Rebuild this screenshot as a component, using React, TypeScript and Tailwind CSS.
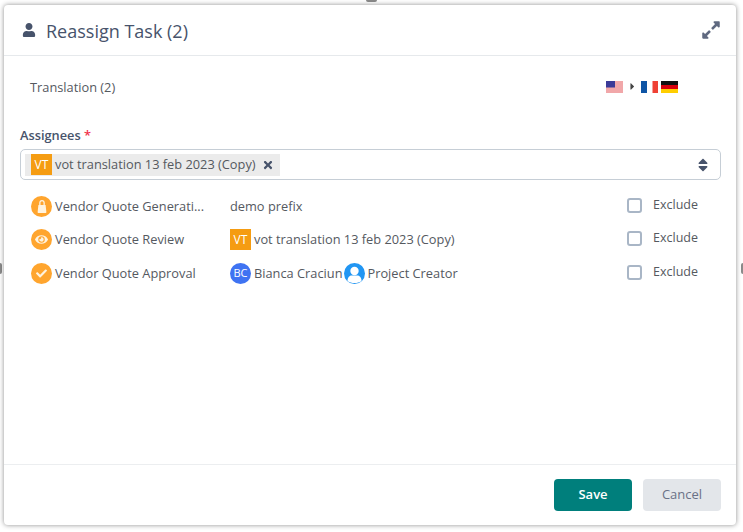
import { FaUser, FaEye, FaCheck, FaTimes, FaExpandAlt, FaSort, FaCaretRight } from 'react-icons/fa';

const VtBadge = () => (
  <span className="flex h-[21px] w-[21px] shrink-0 items-center justify-center bg-[#f59c12] text-[12px] text-white">VT</span>
);

const StepIcon = ({ children }: { children: React.ReactNode }) => (
  <span className="flex h-[21px] w-[21px] shrink-0 items-center justify-center rounded-full bg-[#ffa52e] text-[#fff3df]">
    {children}
  </span>
);

const FlagUs = () => (
  <svg width="17" height="12" viewBox="0 0 17 12">
    <rect width="17" height="12" fill="#f4f4f4" />
    <path d="M0 1h17M0 3h17M0 5h17M0 7h17M0 9h17M0 11h17" stroke="#ee5a5f" strokeWidth="1" />
    <rect width="9" height="6.500" fill="#3b3b98" />
  </svg>
);

const FlagFr = () => (
  <svg width="17" height="12" viewBox="0 0 17 12">
    <rect width="6" height="12" fill="#0f55a5" />
    <rect x="6" width="5.500" height="12" fill="#fff" />
    <rect x="11.500" width="5.500" height="12" fill="#ef4135" />
  </svg>
);

const FlagDe = () => (
  <svg width="17" height="12" viewBox="0 0 17 12">
    <rect width="17" height="4" fill="#111" />
    <rect y="4" width="17" height="4" fill="#d8000c" />
    <rect y="8" width="17" height="4" fill="#ffce00" />
  </svg>
);

const GenerateIcon = () => (
  <svg width="10" height="13" viewBox="0 0 10 13" fill="currentColor">
    <path d="M5 0C3.300 0 2.200 1.200 2.200 3v2H1.400L.6 12.200c0 .4.3.8.7.8h7.400c.4 0 .7-.4.7-.8L8.600 5h-.8V3C7.800 1.200 6.700 0 5 0zM3.500 5V3c0-1 .6-1.700 1.500-1.700S6.500 2 6.500 3v2z" />
  </svg>
);

const CreatorAvatar = () => (
  <svg width="21" height="21" viewBox="0 0 21 21" className="ml-[2px] shrink-0">
    <circle cx="10.500" cy="10.500" r="10.500" fill="#2196f3" />
    <circle cx="10.500" cy="8" r="4.200" fill="#fff" />
    <path d="M3.500 18c0-4 2.500-5.500 4-5.500h6c1.500 0 4 1.500 4 5.500-2 1.500-4.500 2-7 2s-5-.5-7-2z" fill="#fff" />
  </svg>
);

const ExcludeBox = () => (
  <label className="flex -translate-y-[1px] items-center gap-[11px] text-[12.5px] text-[#55595f]">
    <span className="h-[15px] w-[15px] rounded-[3px] border-2 border-[#a9b6c6] bg-white" />
    Exclude
  </label>
);

const steps = [
  {
    name: 'Vendor Quote Generati...',
    icon: <GenerateIcon />,
    who: <span>demo prefix</span>,
  },
  {
    name: 'Vendor Quote Review',
    icon: <FaEye size={13} />,
    who: (
      <>
        <VtBadge />
        <span className="ml-[3px]">vot translation 13 feb 2023 (Copy)</span>
      </>
    ),
  },
  {
    name: 'Vendor Quote Approval',
    icon: <FaCheck size={11} />,
    who: (
      <>
        <span className="flex h-[21px] w-[21px] shrink-0 items-center justify-center rounded-full bg-[#3f73f2] text-[11px] text-white">BC</span>
        <span className="ml-[3px]">Bianca Craciun</span>
        <CreatorAvatar />
        <span className="ml-[2px]">Project Creator</span>
      </>
    ),
  },
];

const App = () => (
  <div className="relative h-[532px] w-[743px] overflow-hidden bg-white pb-[7px] pl-[4px] pr-[7px] pt-[5px] font-['Open_Sans','Noto_Sans',sans-serif]">
    {/* bits of the page behind the dialog */}
    <span className="absolute left-[366px] top-0 h-[2px] w-[11px] rounded-b-full bg-[#8a8a8a]" />
    <span className="absolute left-0 top-[263px] h-[11px] w-[2px] rounded-r-full bg-[#8a8a8a]" />
    <span className="absolute right-0 top-[263px] h-[11px] w-[2px] rounded-l-full bg-[#8a8a8a]" />

    <div className="relative flex h-full flex-col rounded-[4px] bg-white shadow-[0_0_5px_rgba(0,0,0,0.45)]">
      <header className="flex h-[51px] shrink-0 items-center justify-between border-b border-[#e6e9ec] pl-[18px] pr-[15px]">
        <div className="flex items-center gap-[10px]">
          <FaUser size={14} className="text-[#47536b]" />
          <h1 className="translate-y-[1px] text-[18px] text-[#47536b]">Reassign Task (2)</h1>
        </div>
        <FaExpandAlt size={20} className="text-[#5f6980]" />
      </header>

      <main className="flex-1 pl-[16px] pr-[15px]">
        <div className="flex items-center justify-between pb-[29px] pl-[10px] pr-[43px] pt-[22px]">
          <span className="text-[12.8px] text-[#55595f]">Translation (2)</span>
          <div className="flex -translate-y-[1px] items-center">
            <FlagUs />
            <FaCaretRight size={11} className="ml-[4px] mr-[3px] text-[#444]" />
            <FlagFr />
            <span className="ml-[3px]">
              <FlagDe />
            </span>
          </div>
        </div>

        <div className="mb-[4px] text-[12.8px] font-semibold text-[#47536b]">
          Assignees <span className="text-[#f0324b]">*</span>
        </div>
        <div className="flex h-[31px] items-center justify-between rounded-[5px] border border-[#c6ced6] pl-[4px] pr-[9px]">
          <div className="flex h-[22px] items-center bg-[#ebebeb] pl-[6px] pr-[6px] text-[12.8px] text-[#55595f]">
            <VtBadge />
            <span className="ml-[3px]">vot translation 13 feb 2023 (Copy)</span>
            <FaTimes size={12} className="ml-[6px] text-[#47536b]" />
          </div>
          <FaSort size={16} className="text-[#47536b]" />
        </div>

        <div className="mt-[9px] flex flex-col">
          {steps.map((step) => (
            <div key={step.name} className="flex h-[33.5px] items-center pl-[11px] pr-[23px] text-[12.8px] text-[#55595f]">
              <div className="flex w-[199px] items-center gap-[3px]">
                <StepIcon>{step.icon}</StepIcon>
                <span>{step.name}</span>
              </div>
              <div className="flex flex-1 items-center">{step.who}</div>
              <ExcludeBox />
            </div>
          ))}
        </div>
      </main>

      <footer className="flex h-[61px] shrink-0 items-center justify-end gap-[11px] border-t border-[#eceef0] pr-[15px]">
        <button className="h-[32px] w-[78px] rounded-[4px] bg-[#007f7c] text-[13px] font-semibold text-white">Save</button>
        <button className="h-[32px] w-[78px] rounded-[4px] bg-[#e3e6ea] text-[13px] text-[#6a7186]">Cancel</button>
      </footer>
    </div>
  </div>
);

export default App;
